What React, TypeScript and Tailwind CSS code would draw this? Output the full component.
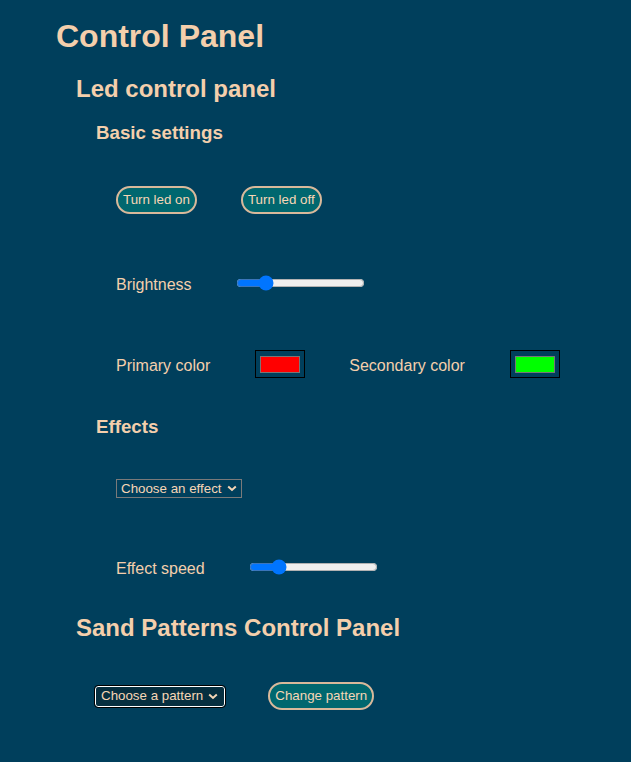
import React from "react";

const Btn = ({ children }: { children: React.ReactNode }) => (
  <button className="h-[28px] px-[5px] rounded-full border-2 border-[#d9b99b] bg-[#00676f] text-[13.33px] text-[#f7d6b6] leading-none whitespace-nowrap">
    {children}
  </button>
);

const Swatch = ({ color }: { color: string }) => (
  <div className="w-[50px] h-[28px] border border-black flex items-center justify-center">
    <div className="w-[40px] h-[17px] border border-[#777]" style={{ background: color }} />
  </div>
);

const Chevron = () => (
  <svg width="10" height="7" viewBox="0 0 10 7" className="ml-[5px]">
    <path d="M1.2 1.5 L5 5 L8.8 1.5" stroke="currentColor" strokeWidth="2" fill="none" />
  </svg>
);

export default function App() {
  return (
    <div
      className="min-h-[762px] w-full bg-[#003f5c] text-[#f4cfac] pl-[56px] overflow-hidden"
      style={{ fontFamily: '"Liberation Sans", Arial, sans-serif' }}
    >
      <div className="pt-[18px]" />
      <h1 className="text-[32px] font-bold h-[37px] leading-[37px]">Control Panel</h1>
      <h2 className="mt-[20px] ml-[20px] text-[24px] font-bold h-[28px] leading-[28px]">Led control panel</h2>
      <h3 className="mt-[19px] ml-[40px] text-[18.72px] font-bold h-[22px] leading-[22px]">Basic settings</h3>

      <div className="mt-[42px] ml-[60px] flex items-center gap-[44px] h-[28px]">
        <Btn>Turn led on</Btn>
        <Btn>Turn led off</Btn>
      </div>

      <div className="mt-[55px] ml-[60px] flex items-center gap-[44px] h-[28px] text-[16px]">
        <span className="pt-[3px]">Brightness</span>
        <input type="range" min={0} max={255} defaultValue={50} className="w-[129px] m-0" />
      </div>

      <div className="mt-[53px] ml-[60px] flex items-center gap-[45px] h-[28px] text-[16px]">
        <span className="pt-[3px]">Primary color</span>
        <Swatch color="#ff0000" />
        <span className="pt-[3px] -ml-[1px]">Secondary color</span>
        <Swatch color="#00ff00" />
      </div>

      <h3 className="mt-[38px] ml-[40px] text-[18.72px] font-bold h-[22px] leading-[22px]">Effects</h3>

      <div className="mt-[41px] ml-[60px] flex h-[19px]">
        <div className="flex items-center h-[19px] border border-[#7a7a7a] pl-[4px] pr-[4px] text-[13.33px] leading-none text-[#f7d6b6]">
          Choose an effect
          <Chevron />
        </div>
      </div>

      <div className="mt-[55px] ml-[60px] flex items-center gap-[44px] h-[28px] text-[16px]">
        <span className="pt-[3px]">Effect speed</span>
        <input type="range" min={0} max={255} defaultValue={50} className="w-[129px] m-0" />
      </div>

      <h2 className="mt-[33px] ml-[20px] text-[24px] font-bold h-[28px] leading-[28px]">Sand Patterns Control Panel</h2>

      <div className="mt-[40px] ml-[39px] flex items-center gap-[43px] h-[28px]">
        <div className="flex items-center h-[21px] rounded-[3px] border border-white outline outline-1 outline-black bg-[#062f40] pl-[5px] pr-[6px] text-[13.33px] leading-none text-[#f7d6b6]">
          Choose a pattern
          <Chevron />
        </div>
        <Btn>Change pattern</Btn>
      </div>
    </div>
  );
}
